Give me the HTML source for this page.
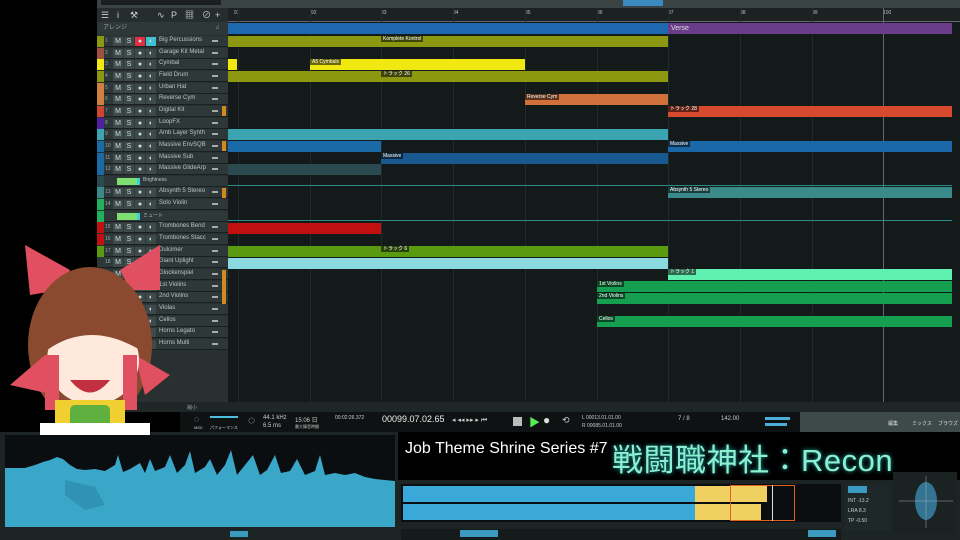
<!DOCTYPE html>
<html><head><meta charset="utf-8">
<style>
*{margin:0;padding:0;box-sizing:border-box}
body{width:960px;height:540px;background:#000;overflow:hidden;position:relative;font-family:"Liberation Sans","Noto Sans CJK JP",sans-serif;color:#c8d0d0}
.a{position:absolute}
.row{position:absolute;left:97px;width:131px;height:11px;background:#2e3838;border-bottom:1px solid #1a2020}
.row .c{position:absolute;left:0;top:0;width:7px;height:11px}
.row .n{position:absolute;left:8px;top:2px;font-size:5px;color:#9aa}
.row .b{position:absolute;top:1px;width:10px;height:9px;background:#3e4a4a;font-size:7px;line-height:9px;text-align:center;color:#cdd}
.row .nm{position:absolute;left:62px;top:1px;font-size:6px;color:#b8c4c4;white-space:nowrap}
.row .ic{position:absolute;left:115px;top:4px;width:6px;height:2px;background:#aaa}
.clip{position:absolute;height:11px}
.lbl{position:absolute;top:0;font-size:5px;color:#fff;background:rgba(0,0,0,.55);padding:0 2px;line-height:6px}
.gl{position:absolute;top:8px;width:1px;height:400px;background:#1f2a2a}
</style></head><body>
<div class="a" style="left:97px;top:0;width:863px;height:8px;background:#3a4444"></div>
<div class="a" style="left:101px;top:0;width:120px;height:5px;background:#1a2020"></div>
<div class="a" style="left:623px;top:0;width:40px;height:6px;background:#3a8ac0"></div>
<div class="a" style="left:97px;top:8px;width:131px;height:14px;background:#252d2d;font-size:9px;color:#ccd;line-height:14px">
 <span class="a" style="left:4px">☰</span><span class="a" style="left:20px">i</span><span class="a" style="left:33px">⚒</span><span class="a" style="left:60px">∿</span><span class="a" style="left:74px">P</span><span class="a" style="left:88px">▦</span><span class="a" style="left:105px">⊘</span><span class="a" style="left:118px">+</span></div>
<div class="a" style="left:97px;top:22px;width:131px;height:13px;background:#2f3838;font-size:6px;color:#9aa;line-height:13px;padding-left:6px">アレンジ<span class="a" style="left:118px">♫</span></div>
<div class="a" style="left:228px;top:8px;width:732px;height:404px;background:#141a1a"></div>
<div class="a" style="left:228px;top:8px;width:732px;height:14px;background:#1c2222;border-bottom:1px solid #667"></div>
<div class="a" style="left:228px;top:8px;width:732px;height:14px;font-size:5px;color:#bbb">
<span class="a" style="left:6px;top:2px">91</span><span class="a" style="left:83px;top:2px">92</span><span class="a" style="left:153px;top:2px">93</span><span class="a" style="left:225px;top:2px">94</span><span class="a" style="left:297px;top:2px">95</span><span class="a" style="left:369px;top:2px">96</span><span class="a" style="left:440px;top:2px">97</span><span class="a" style="left:512px;top:2px">98</span><span class="a" style="left:584px;top:2px">99</span><span class="a" style="left:655px;top:2px">100</span></div>
<div class="gl" style="left:238px"></div><div class="gl" style="left:310px"></div><div class="gl" style="left:381px"></div><div class="gl" style="left:453px"></div><div class="gl" style="left:525px"></div><div class="gl" style="left:597px"></div><div class="gl" style="left:668px"></div><div class="gl" style="left:740px"></div><div class="gl" style="left:812px"></div><div class="gl" style="left:883px;background:#667"></div>
<div class="clip" style="left:228px;top:23px;width:440px;background:#1e68b0"></div>
<div class="clip" style="left:668px;top:23px;width:284px;background:#6a3c8a;font-size:7px;color:#ddd;padding-left:3px;line-height:11px">Verse</div>
<div class="clip" style="left:228px;top:36px;width:440px;background:#8c9810"><span class="lbl" style="left:153px">Komplete Kontrol</span></div>
<div class="clip" style="left:228px;top:59px;width:9px;background:#f0e810"></div>
<div class="clip" style="left:310px;top:59px;width:215px;background:#f0e810"><span class="lbl" style="left:0">A5 Cymbals</span></div>
<div class="clip" style="left:228px;top:71px;width:440px;background:#8c9810"><span class="lbl" style="left:153px">トラック 26</span></div>
<div class="clip" style="left:525px;top:94px;width:143px;background:#d0703a"><span class="lbl" style="left:0">Reverse Cym</span></div>
<div class="clip" style="left:668px;top:106px;width:284px;background:#d84a30"><span class="lbl" style="left:0">トラック 28</span></div>
<div class="clip" style="left:228px;top:129px;width:440px;background:#3aa4b0"></div>
<div class="clip" style="left:228px;top:141px;width:153px;background:#1a6aa8"></div>
<div class="clip" style="left:668px;top:141px;width:284px;background:#1a68a8"><span class="lbl" style="left:0">Massive</span></div>
<div class="clip" style="left:381px;top:153px;width:287px;background:#185a90"><span class="lbl" style="left:0">Massive</span></div>
<div class="clip" style="left:228px;top:164px;width:153px;background:#2a4a50"></div>
<div class="a" style="left:228px;top:185px;width:724px;height:1px;background:#2a8a8a"></div>
<div class="clip" style="left:668px;top:187px;width:284px;background:#3a8a8a"><span class="lbl" style="left:0">Absynth 5 Stereo</span></div>
<div class="a" style="left:228px;top:220px;width:724px;height:1px;background:#2a8a8a"></div>
<div class="clip" style="left:228px;top:223px;width:153px;background:#c01010"></div>
<div class="clip" style="left:228px;top:246px;width:440px;background:#5a9a10"><span class="lbl" style="left:153px">トラック 6</span></div>
<div class="clip" style="left:228px;top:258px;width:440px;background:#8ad8e0"></div>
<div class="clip" style="left:668px;top:269px;width:284px;background:#60f0b0"><span class="lbl" style="left:0">トラック 1</span></div>
<div class="clip" style="left:597px;top:281px;width:355px;background:#14a050"><span class="lbl" style="left:0">1st Violins</span></div>
<div class="clip" style="left:597px;top:293px;width:355px;background:#14a050"><span class="lbl" style="left:0">2nd Violins</span></div>
<div class="clip" style="left:597px;top:316px;width:355px;background:#14a050"><span class="lbl" style="left:0">Cellos</span></div>
<div class="a" style="left:97px;top:35px;width:131px;height:377px;background:#283030"></div>
<div id="tl"></div>
<script>
var t=[["Big Percussions","#8c9810",1],["Garage Kit Metal","#a05040"],["Cymbal","#f0e810"],["Field Drum","#8c9810"],["Urban Hat","#d08040"],["Reverse Cym","#d08040"],["Digital Kit","#d04530"],["LoopFX","#5020a0"],["Amb Layer Synth","#3aa4b0"],["Massive EnvSQB","#1a6aa8"],["Massive Sub","#1a6aa8"],["Massive GlideArp","#1a6aa8"],["A","#2a4a50"],["Absynth 5 Stereo","#3a8a8a"],["Solo Violin","#20b060"],["B","#20b060"],["Trombones Bend","#c01010"],["Trombones Stacc","#c01010"],["Dulcimer","#5a9a10"],["Giant Uplight",""],["Glockenspiel",""],["1st Violins",""],["2nd Violins",""],["Violas",""],["Cellos",""],["Horns Legato",""],["Horns Multi",""]];
var h="",n=1;
for(var i=0;i<t.length;i++){var y=36+i*11.65;
if(t[i][0]=="A"||t[i][0]=="B"){h+='<div class="row" style="top:'+y+'px"><div class="c" style="background:'+t[i][1]+'"></div><div class="a" style="left:20px;top:2px;width:20px;height:7px;background:#7ee070"></div><div class="a" style="left:40px;top:2px;width:3px;height:7px;background:#3ad0e0"></div><span class="nm" style="left:46px;font-size:5px">'+(t[i][0]=="A"?"Brightness":"ミュート")+'</span></div>';continue;}
h+='<div class="row" style="top:'+y+'px"><div class="c" style="background:'+t[i][1]+'"></div><span class="n">'+(n++)+'</span><span class="b" style="left:16px">M</span><span class="b" style="left:27px">S</span><span class="b" style="left:38px;'+(t[i][2]?'background:#e03040':'')+'">●</span><span class="b" style="left:49px;'+(t[i][2]?'background:#40c0d0':'')+'">◐</span><span class="nm">'+t[i][0]+'</span><span class="ic"></span></div>';}
h+='<div class="a" style="left:222px;top:106px;width:4px;height:10px;background:#d08a20"></div><div class="a" style="left:222px;top:141px;width:4px;height:10px;background:#d08a20"></div><div class="a" style="left:222px;top:188px;width:4px;height:10px;background:#d08a20"></div><div class="a" style="left:222px;top:270px;width:4px;height:34px;background:#d08a20"></div>';
document.getElementById("tl").innerHTML=h;
</script>
<div class="a" style="left:97px;top:402px;width:863px;height:10px;background:#1e2626;font-size:5px;color:#999"><span class="a" style="left:90px;top:2px">縮小</span></div>
<div class="a" style="left:180px;top:412px;width:620px;height:20px;background:#0e1212;font-size:6px;color:#ccc">
 <span class="a" style="left:14px;top:2px;font-size:9px">◌</span><span class="a" style="left:14px;top:13px;font-size:4px">MIDI</span>
 <div class="a" style="left:30px;top:4px;width:28px;height:2px;background:#4ac0e0"></div><span class="a" style="left:30px;top:13px;font-size:4px">パフォーマンス</span>
 <span class="a" style="left:68px;top:1px;font-size:12px">◌</span>
 <span class="a" style="left:83px;top:3px">44.1 kHz</span><span class="a" style="left:83px;top:11px">6.5 ms</span>
 <span class="a" style="left:115px;top:3px">15:06 日</span><span class="a" style="left:115px;top:12px;font-size:4px">最大録音時間</span>
 <span class="a" style="left:155px;top:3px;font-size:5px">00:02:26.372</span>
 <span class="a" style="left:202px;top:2px;font-size:9px;color:#eee">00099.07.02.65</span>
 <span class="a" style="left:272px;top:4px;font-size:7px">◂ ◂◂ ▸▸ ▸ ⏮</span>
 <div class="a" style="left:333px;top:5px;width:9px;height:9px;background:#bbb"></div>
 <span class="a" style="left:349px;top:2px;font-size:11px;color:#5e5">▶</span>
 <span class="a" style="left:363px;top:1px;font-size:12px;color:#ddd">●</span>
 <span class="a" style="left:382px;top:3px;font-size:9px">⟲</span>
 <span class="a" style="left:402px;top:3px;font-size:5px">L 00013.01.01.00</span><span class="a" style="left:402px;top:11px;font-size:5px">R 00085.01.01.00</span>
 <span class="a" style="left:498px;top:4px">7 / 8</span><span class="a" style="left:541px;top:4px">142.00</span>
 <div class="a" style="left:585px;top:5px;width:25px;height:3px;background:#4ab0d8"></div><div class="a" style="left:585px;top:11px;width:22px;height:3px;background:#4ab0d8"></div>
</div>
<div class="a" style="left:800px;top:412px;width:160px;height:20px;background:#3e4a4a;font-size:5px;color:#ddd"><span class="a" style="left:88px;top:8px">編集</span><span class="a" style="left:112px;top:8px">ミックス</span><span class="a" style="left:138px;top:8px">ブラウズ</span></div>
<div class="a" style="left:0;top:432px;width:398px;height:108px;background:#1c2424"></div>
<div class="a" style="left:5px;top:435px;width:390px;height:92px;background:#0a0e10"></div>
<svg class="a" style="left:5px;top:435px" width="390" height="92"><polygon fill="#3aa6c8" points="0,33 20,33 30,30 38,27 45,25 52,22 58,24 65,30 72,34 80,35 90,34 100,36 110,30 113,20 118,37 125,34 135,28 140,38 145,24 150,36 160,32 165,20 172,38 180,30 185,16 190,38 200,32 205,24 212,40 220,30 226,15 232,40 240,30 248,20 255,40 262,35 270,20 276,38 285,36 292,24 300,40 310,36 315,20 320,40 330,38 340,40 350,38 360,42 370,44 380,45 390,46 390,92 0,92"/><polygon fill="#2a86a8" opacity=".6" points="60,45 90,52 100,70 80,75 60,60"/></svg>
<div class="a" style="left:0;top:529px;width:398px;height:11px;background:#1c2424"></div>
<div class="a" style="left:230px;top:531px;width:18px;height:6px;background:#3a9ac0"></div>
<div class="a" style="left:398px;top:432px;width:562px;height:48px;background:#000"></div>
<div class="a" style="left:405px;top:440px;font-size:16px;color:#fff;white-space:nowrap">Job Theme Shrine Series #7</div>
<div class="a" style="left:612px;top:435px;font-size:31px;color:#8cf0d0;white-space:nowrap;text-shadow:0 0 4px #2aa;letter-spacing:.5px">戦闘職神社：Recon</div>
<div class="a" style="left:398px;top:480px;width:562px;height:60px;background:#1c2424"></div>
<div class="a" style="left:401px;top:484px;width:440px;height:38px;background:#0a0e10"></div>
<div class="a" style="left:403px;top:486px;width:292px;height:16px;background:#3aa8d8"></div>
<div class="a" style="left:695px;top:486px;width:72px;height:16px;background:#f0d060"></div>
<div class="a" style="left:403px;top:504px;width:292px;height:16px;background:#3aa8d8"></div>
<div class="a" style="left:695px;top:504px;width:66px;height:16px;background:#f0d060"></div>
<div class="a" style="left:730px;top:485px;width:65px;height:36px;border:1px solid #e06020"></div>
<div class="a" style="left:772px;top:485px;width:1px;height:36px;background:#ddd"></div>
<div class="a" style="left:401px;top:529px;width:440px;height:11px;background:#151b1b"></div>
<div class="a" style="left:460px;top:530px;width:38px;height:7px;background:#3a9ac0"></div>
<div class="a" style="left:845px;top:484px;width:45px;height:46px;background:#1e2828;font-size:5px;color:#ccc"><div class="a" style="left:3px;top:2px;width:19px;height:7px;background:#3a9ac0"></div><span class="a" style="left:3px;top:14px">INT -13.2</span><span class="a" style="left:3px;top:24px">LRA 8.3</span><span class="a" style="left:3px;top:34px">TP -0.50</span></div>
<div class="a" style="left:808px;top:530px;width:28px;height:7px;background:#3a9ac0"></div>
<div class="a" style="left:893px;top:472px;width:64px;height:62px;background:#1a2222"></div>
<svg class="a" style="left:893px;top:472px" width="64" height="62"><ellipse cx="33" cy="29" rx="11" ry="19" fill="#3a8ab0" opacity=".8"/><line x1="33" y1="4" x2="33" y2="56" stroke="#aaa" stroke-width=".5"/><line x1="6" y1="29" x2="60" y2="29" stroke="#aaa" stroke-width=".5"/></svg>
<svg class="a" style="left:0;top:235px" width="175" height="200">
<path d="M25 10 L70 35 L60 55 L30 60 Z" fill="#e05060"/>
<path d="M160 10 L120 35 L130 55 L160 55 Z" fill="#e05060"/>
<ellipse cx="90" cy="110" rx="62" ry="78" fill="#8a4a30"/>
<path d="M10 150 L45 120 L55 160 Z" fill="#e05060"/>
<path d="M135 120 L170 140 L145 160 Z" fill="#e05060"/>
<ellipse cx="93" cy="125" rx="46" ry="45" fill="#ffe8dc"/>
<path d="M47 95 Q90 55 140 95 L140 115 Q90 85 47 115 Z" fill="#8a4a30"/>
<path d="M70 145 Q90 170 110 145 Z" fill="#c03040"/>
<rect x="45" y="120" width="14" height="55" fill="#e05060"/>
<rect x="123" y="120" width="14" height="55" fill="#e05060"/>
<rect x="55" y="165" width="70" height="35" fill="#f0d030"/>
<rect x="70" y="170" width="40" height="30" rx="5" fill="#60b040"/>
<rect x="40" y="188" width="110" height="12" fill="#fff"/>
</svg>
</body></html>
